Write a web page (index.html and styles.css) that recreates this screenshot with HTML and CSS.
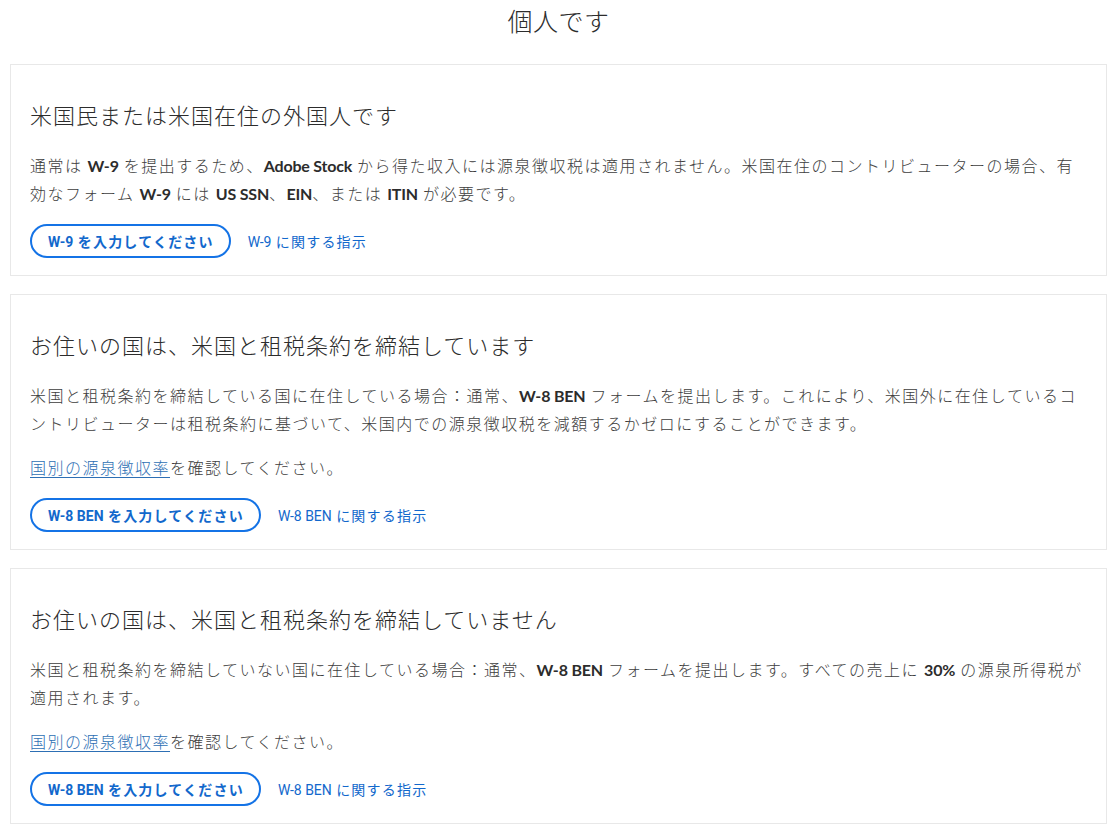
FILE: index.html
```html
<!DOCTYPE html>
<html lang="ja">
<head>
<meta charset="utf-8">
<title>個人です</title>
<link rel="stylesheet" href="styles.css">
</head>
<body>
<main class="page">
  <h1 class="page-title">個人です</h1>

  <section class="card">
    <h2 class="card-title">米国民または米国在住の外国人です</h2>
    <p class="card-text">通常は <b class="em">W-9</b> を提出するため、<b class="em">Adobe Stock</b> から得た収入には源泉徴収税は適用されません。米国在住のコントリビューターの場合、有効なフォーム <b class="em">W-9</b> には <b class="em">US SSN</b>、<b class="em">EIN</b>、または <b class="em">ITIN</b> が必要です。</p>
    <div class="actions">
      <a class="btn" href="#"><span class="btn-label"><span class="lat">W-9</span> を入力してください</span></a>
      <a class="link" href="#"><span class="lat">W-9</span> に関する指示</a>
    </div>
  </section>

  <section class="card">
    <h2 class="card-title">お住いの国は、米国と租税条約を締結しています</h2>
    <p class="card-text">米国と租税条約を締結している国に在住している場合：通常、<b class="em">W-8 BEN</b> フォームを提出します。これにより、米国外に在住しているコントリビューターは租税条約に基づいて、米国内での源泉徴収税を減額するかゼロにすることができます。</p>
    <p class="card-text note"><a class="rate" href="#">国別の源泉徴収率</a>を確認してください。</p>
    <div class="actions">
      <a class="btn" href="#"><span class="btn-label"><span class="lat">W-8 BEN</span> を入力してください</span></a>
      <a class="link" href="#"><span class="lat">W-8 BEN</span> に関する指示</a>
    </div>
  </section>

  <section class="card">
    <h2 class="card-title">お住いの国は、米国と租税条約を締結していません</h2>
    <p class="card-text">米国と租税条約を締結していない国に在住している場合：通常、<b class="em">W-8 BEN</b> フォームを提出します。すべての売上に <b class="em">30%</b> の源泉所得税が適用されます。</p>
    <p class="card-text note"><a class="rate" href="#">国別の源泉徴収率</a>を確認してください。</p>
    <div class="actions">
      <a class="btn" href="#"><span class="btn-label"><span class="lat">W-8 BEN</span> を入力してください</span></a>
      <a class="link" href="#"><span class="lat">W-8 BEN</span> に関する指示</a>
    </div>
  </section>
</main>
</body>
</html>
```

FILE: styles.css
```css
* { box-sizing: border-box; }

html, body {
  margin: 0;
  padding: 0;
  background: #ffffff;
}

body {
  font-family: "Noto Sans CJK JP", "Noto Sans", sans-serif;
  color: #3d3d3d;
}

.page {
  width: 1097px;
  margin-left: 10px;
  display: flex;
  flex-direction: column;
  gap: 18px;
  padding-bottom: 20px;
}

.page-title {
  margin: 0;
  height: 46px;
  padding-top: 2px;
  text-align: center;
  font-size: 25px;
  line-height: 36px;
  font-weight: 300;
  letter-spacing: 0.5px;
  color: #2c2c2c;
}

.card {
  border: 1px solid #e8e8e8;
  padding: 33px 19px 17px 19px;
}

.card-title {
  margin: 0;
  font-size: 22px;
  line-height: 32px;
  font-weight: 300;
  letter-spacing: 1px;
  color: #2c2c2c;
}

.card-text {
  margin: 21px 0 0 0;
  font-size: 16px;
  line-height: 28px;
  font-weight: 300;
  letter-spacing: 1.5px;
  color: #3d3d3d;
}

.card-text.note {
  margin-top: 16px;
}

.em {
  font-family: "Lato", "Open Sans", sans-serif;
  font-weight: 700;
  letter-spacing: -0.2px;
  line-height: 1;
  color: #2c2c2c;
}

.rate {
  color: #2d6fb4;
  text-decoration: underline;
  text-underline-offset: 3px;
}

.actions {
  margin-top: 17px;
  display: flex;
  align-items: center;
  gap: 17px;
}

.btn {
  display: inline-flex;
  align-items: center;
  height: 34px;
  padding: 0 15px 0 16px;
  border: 2px solid #1473e6;
  border-radius: 17px;
  color: #1268cc;
  text-decoration: none;
  font-size: 14px;
  font-weight: 700;
  letter-spacing: 1.2px;
}

.btn-label {
  line-height: 1;
}

.link {
  color: #1268cc;
  text-decoration: none;
  font-size: 14px;
  font-weight: 400;
  letter-spacing: 1.2px;
}

.lat {
  font-family: "Roboto", "Noto Sans", sans-serif;
  letter-spacing: 0;
}
```
